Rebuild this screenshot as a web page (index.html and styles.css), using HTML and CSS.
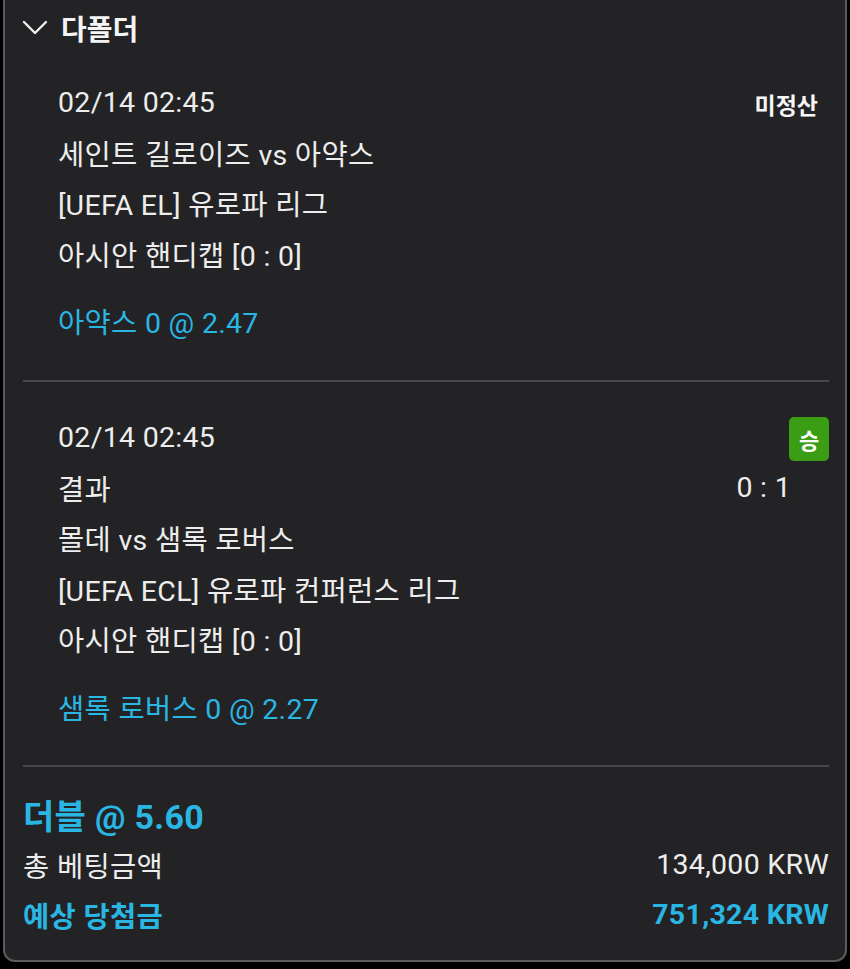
FILE: index.html
```html
<!DOCTYPE html>
<html lang="ko">
<head>
  <meta charset="UTF-8" />
  <meta name="viewport" content="width=device-width, initial-scale=1.0"/>
  <title>다폴더</title>
  <link rel="stylesheet" href="styles.css">
</head>
<body>
  <div class="card">
    <!-- Header -->
    <div class="card-header">
      <svg class="chevron" width="26" height="16" viewBox="0 0 26 16">
        <polyline points="2,2 13,13 24,2" fill="none" stroke="#f2f2f2" stroke-width="2.4" stroke-linecap="round" stroke-linejoin="round"/>
      </svg>
      <span class="title">다폴더</span>
    </div>

    <!-- Bet 1 -->
    <div class="bet">
      <div class="row">
        <span>02/14 02:45</span>
        <span class="status">미정산</span>
      </div>
      <div class="row">세인트 길로이즈 vs 아약스</div>
      <div class="row">[UEFA EL] 유로파 리그</div>
      <div class="row">아시안 핸디캡 [0 : 0]</div>
      <div class="row pick">아약스 0 @ 2.47</div>
    </div>

    <div class="divider"></div>

    <!-- Bet 2 -->
    <div class="bet">
      <div class="row">
        <span>02/14 02:45</span>
        <span class="badge-win">승</span>
      </div>
      <div class="row">
        <span>결과</span>
        <span class="score">0 : 1</span>
      </div>
      <div class="row">몰데 vs 샘록 로버스</div>
      <div class="row">[UEFA ECL] 유로파 컨퍼런스 리그</div>
      <div class="row">아시안 핸디캡 [0 : 0]</div>
      <div class="row pick">샘록 로버스 0 @ 2.27</div>
    </div>

    <div class="divider"></div>

    <!-- Summary -->
    <div class="summary">
      <div class="row combo">더블 @ 5.60</div>
      <div class="row">
        <span>총 베팅금액</span>
        <span>134,000 KRW</span>
      </div>
      <div class="row payout">
        <span>예상 당첨금</span>
        <span>751,324 KRW</span>
      </div>
    </div>
  </div>
</body>
</html>
```

FILE: styles.css
```css
body {
  margin: 0;
  background: #000;
  font-family: Roboto, "Noto Sans CJK KR", sans-serif;
  color: #ededed;
}
.card {
  margin: 0 3px;
  height: 962px;
  box-sizing: border-box;
  background: #232325;
  border: 2px solid #5c5c5f;
  border-top: none;
  border-radius: 0 0 12px 12px;
  padding: 0 16px 0 18px;
}
.card-header {
  display: flex;
  align-items: center;
  height: 50px;
  padding-top: 6px;
  box-sizing: border-box;
}
.chevron {
  margin-left: -1px;
  margin-right: 13px;
}
.title {
  font-size: 28px;
  font-weight: bold;
  color: #f4f4f4;
}
.bet {
  padding: 27px 0 34px 35px;
}
.bet + .divider + .bet {
  padding-top: 30px;
}
.row {
  display: flex;
  justify-content: space-between;
  align-items: center;
  height: 50.4px;
  font-size: 28.5px;
  letter-spacing: 0.3px;
}
.status {
  font-size: 23px;
  font-weight: bold;
  letter-spacing: 0;
  color: #f6f6f6;
  margin-right: 11px;
  margin-top: 4px;
}
.badge-win {
  display: flex;
  align-items: center;
  justify-content: center;
  width: 40px;
  height: 44px;
  margin-top: 4px;
  background: #3b9d14;
  border-radius: 5px;
  color: #fff;
  font-size: 22px;
  font-weight: bold;
  letter-spacing: 0;
}
.score {
  margin-right: 38px;
}
.pick {
  margin-top: 17px;
  color: #2ab6e3;
}
.divider {
  height: 2px;
  background: #48484b;
}
.summary {
  padding-top: 22px;
}
.summary .row {
  height: 50px;
}
.combo {
  font-size: 34px;
  font-weight: bold;
  color: #2ab6e3;
}
.payout {
  font-weight: bold;
  color: #2ab6e3;
}
```
